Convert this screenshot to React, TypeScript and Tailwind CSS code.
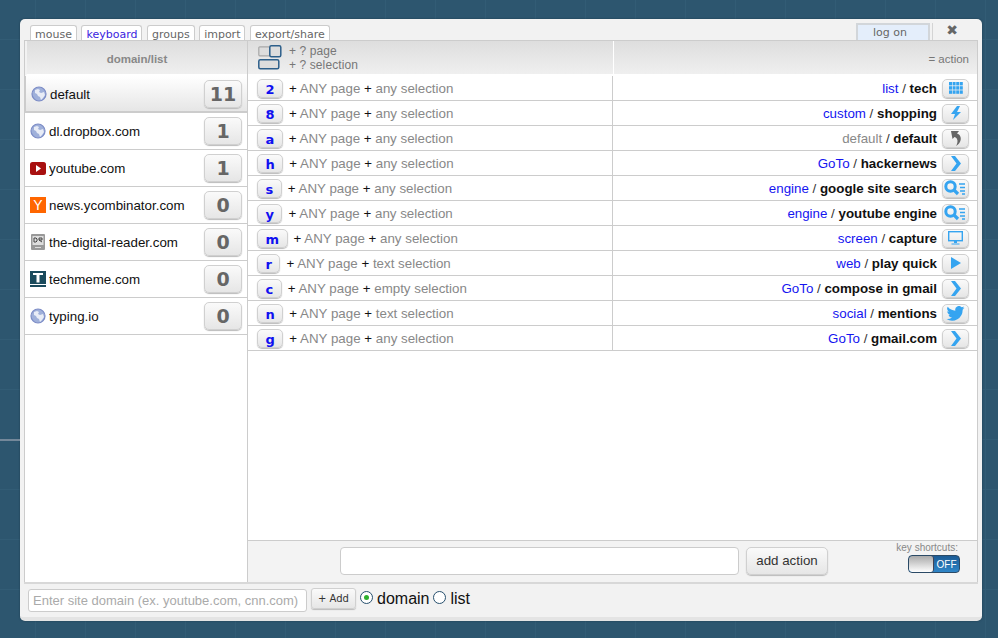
import React from 'react'

const blue = '#35a4f0'

function Globe() {
  return (
    <svg width="16" height="16" viewBox="0 0 16 16" className="shrink-0">
      <circle cx="8" cy="8" r="7" fill="#9fb0da" stroke="#7c8cc6" strokeWidth="1.200" />
      <path d="M4 4l3-1 2 1-1 2 2 1 3-1 1 3-2 3-2 2-1-3-2-1-1-2-2-1z" fill="#e8ecf6" />
    </svg>
  )
}

function Youtube() {
  return (
    <svg width="16" height="13" viewBox="0 0 16 13" className="shrink-0">
      <rect width="16" height="13" rx="2.500" fill="#a81010" />
      <path d="M6 3l5 3.500-5 3.500z" fill="#fff" />
    </svg>
  )
}

function Ycomb() {
  return (
    <div className="w-4 h-4 shrink-0 bg-[#ff6600] text-white text-[14px] leading-4 text-center font-['Liberation_Sans',sans-serif]">
      Y
    </div>
  )
}

function DigitalReader() {
  return (
    <svg width="16" height="16" viewBox="0 0 16 16" className="shrink-0">
      <rect x="1" width="14" height="16" rx="1" fill="#999" />
      <rect x="2.500" y="2" width="11" height="9" fill="#ddd" />
      <rect x="5" y="13" width="6" height="1" fill="#ddd" />
      <path d="M4 4h2l1 1v2l-1 1H4zM9 4h3v2H9zM9 6l3 2" fill="none" stroke="#444" strokeWidth="1" />
    </svg>
  )
}

function Techmeme() {
  return (
    <svg width="16" height="16" viewBox="0 0 16 16" className="shrink-0">
      <rect width="16" height="13" fill="#1a4a5c" />
      <rect y="14" width="16" height="2" fill="#1a4a5c" />
      <path d="M3 2h10v2h-3.500v7.500h-3V4H3z" fill="#fff" />
    </svg>
  )
}

const domains = [
  { name: 'default', count: '11', icon: <Globe />, active: true },
  { name: 'dl.dropbox.com', count: '1', icon: <Globe /> },
  { name: 'youtube.com', count: '1', icon: <Youtube /> },
  { name: 'news.ycombinator.com', count: '0', icon: <Ycomb /> },
  { name: 'the-digital-reader.com', count: '0', icon: <DigitalReader /> },
  { name: 'techmeme.com', count: '0', icon: <Techmeme /> },
  { name: 'typing.io', count: '0', icon: <Globe /> },
]

const GridIcon = () => (
  <svg width="14" height="12" viewBox="0 0 14 12" fill={blue}>
    {[0, 3.600, 7.200, 10.800].map((x) => [0, 4.200, 8.400].map((y) => <rect key={`${x}-${y}`} x={x} y={y} width="3" height="3.400" />))}
  </svg>
)
const BoltIcon = () => (
  <svg width="12" height="14" viewBox="0 0 12 14" fill={blue}>
    <path d="M7 0L1 8h4l-2 6 8-8H7l3-6z" />
  </svg>
)
const BackIcon = () => (
  <svg width="14" height="15" viewBox="0 0 14 15" fill="#666">
    <path d="M2 0l8 0-2 2.500c3 1 4.500 4 3.500 7-.5 2-2 4-4.500 5.500 1.500-2.500 2-5 1-7-.5-1-1.500-1.800-2.500-2L3.500 8z" />
  </svg>
)
const ChevronIcon = () => (
  <svg width="10" height="15" viewBox="0 0 10 15" fill={blue}>
    <path d="M0 0h4l6 7.500-6 7.500H0l5.500-7.500z" />
  </svg>
)
const SearchIcon = () => (
  <svg width="23" height="16" viewBox="0 0 23 16" fill="none">
    <circle cx="6.500" cy="6.500" r="4.700" stroke={blue} strokeWidth="3" />
    <path d="M10 10l4 4" stroke={blue} strokeWidth="3.200" />
    <path d="M15 4h6M16 7.500h5M16 11h5M18 14h3" stroke={blue} strokeWidth="1.300" />
  </svg>
)
const ScreenIcon = () => (
  <svg width="15" height="14" viewBox="0 0 15 14" fill="none">
    <rect x="0.700" y="0.700" width="13.600" height="9" stroke={blue} strokeWidth="1.400" />
    <path d="M6 10h3v2H6zM3.500 12.500h8v1h-8z" fill={blue} />
  </svg>
)
const PlayIcon = () => (
  <svg width="10" height="12" viewBox="0 0 10 12" fill={blue}>
    <path d="M0 0l10 6-10 6z" />
  </svg>
)
const BirdIcon = () => (
  <svg width="19" height="15" viewBox="0 0 24 20" fill={blue}>
    <path d="M24 2.400a9.800 9.800 0 0 1-2.800.8A4.900 4.900 0 0 0 23.300.5a9.800 9.800 0 0 1-3.100 1.200A4.900 4.900 0 0 0 11.800 6.200 14 14 0 0 1 1.700.9a4.900 4.900 0 0 0 1.500 6.600 4.900 4.900 0 0 1-2.200-.6c0 2.400 1.700 4.400 3.900 4.900a4.900 4.900 0 0 1-2.200.1 4.900 4.900 0 0 0 4.600 3.400A9.900 9.900 0 0 1 0 17.300 14 14 0 0 0 21.500 4.900c1-.7 1.800-1.500 2.500-2.500z" />
  </svg>
)

const actions = [
  { key: '2', sel: 'any selection', type: 'list', name: 'tech', icon: <GridIcon /> },
  { key: '8', sel: 'any selection', type: 'custom', name: 'shopping', icon: <BoltIcon /> },
  { key: 'a', sel: 'any selection', type: 'default', name: 'default', icon: <BackIcon />, gray: true },
  { key: 'h', sel: 'any selection', type: 'GoTo', name: 'hackernews', icon: <ChevronIcon /> },
  { key: 's', sel: 'any selection', type: 'engine', name: 'google site search', icon: <SearchIcon /> },
  { key: 'y', sel: 'any selection', type: 'engine', name: 'youtube engine', icon: <SearchIcon /> },
  { key: 'm', sel: 'any selection', type: 'screen', name: 'capture', icon: <ScreenIcon /> },
  { key: 'r', sel: 'text selection', type: 'web', name: 'play quick', icon: <PlayIcon /> },
  { key: 'c', sel: 'empty selection', type: 'GoTo', name: 'compose in gmail', icon: <ChevronIcon /> },
  { key: 'n', sel: 'text selection', type: 'social', name: 'mentions', icon: <BirdIcon /> },
  { key: 'g', sel: 'any selection', type: 'GoTo', name: 'gmail.com', icon: <ChevronIcon /> },
]

const tabs = ['mouse', 'keyboard', 'groups', 'import', 'export/share']

const pill = 'border border-[#d0d0d0] bg-gradient-to-b from-[#fafafa] to-[#e6e6e6] shadow-[0_1px_1px_#bbb]'

export default function App() {
  return (
    <div className="relative w-[998px] h-[638px] overflow-hidden pt-[19px] pl-[20px] bg-[#2d566f] bg-[linear-gradient(#325c75_1px,transparent_1px),linear-gradient(90deg,#325c75_1px,transparent_1px)] bg-[size:50px_50px] bg-[position:35px_39px] font-['Liberation_Sans',sans-serif]">
      <div className="absolute left-0 top-[439px] w-[20px] h-[2px] bg-[#74889a]" />
      <div className="w-[962px] h-[602px] rounded-[5px] bg-[#f2f2f2] border-b-4 border-[#e4e4e4] flex flex-col px-1 shadow-[0_0_2px_#1c3a4c]">
        {/* tab bar */}
        <div className="h-[21px] shrink-0 flex items-end pl-[6px] relative">
          <div className="flex gap-[4.500px] font-['DejaVu_Sans',sans-serif] text-[11px] leading-[17px] text-[#666]">
            {tabs.map((t) => (
              <div
                key={t}
                className={`h-[15px] px-[4px] border border-b-0 border-[#ccc] rounded-t-[3px] bg-white overflow-hidden ${
                  t === 'keyboard' ? 'text-[#3a1de0]' : ''
                }`}
              >
                {t}
              </div>
            ))}
          </div>
          <div className="absolute right-[48px] top-[4px] w-[74px] h-[17px] pr-[6px] bg-[#e4eefb] border-2 border-b-0 border-[#d2d6da] text-center font-['DejaVu_Sans',sans-serif] text-[11px] leading-[15px] text-[#666]">
            log on
          </div>
          <div className="absolute right-[45px] top-[4px] h-[17px] w-px bg-[#d4d4d4]" />
          <div className="absolute right-[20px] top-[1px] font-['DejaVu_Sans',sans-serif] text-[14px] leading-[20px] text-[#666]">
            ✖
          </div>
        </div>

        {/* main panel */}
        <div className="h-[542px] shrink-0 flex border-t border-x border-[#ccc] bg-white">
          <div className="w-[223px] shrink-0 border-r border-[#ccc] flex flex-col">
            <div className="h-[35px] shrink-0 border-l-2 border-[#f2f2f2] bg-gradient-to-b from-[#dedede] to-[#efefef] text-center text-[11.500px] leading-[37px] font-bold text-[#888] border-b-2 border-b-white">
              domain/list
            </div>
            {domains.map((d) => (
              <div
                key={d.name}
                className={`h-[37px] shrink-0 border-b border-[#ccc] flex items-center pl-[5px] pr-[5px] text-[13.330px] text-[#111] ${
                  d.active ? 'bg-gradient-to-b from-white to-[#e6e6e6] border-b-2 border-l border-l-[#ccc]' : ''
                }`}
              >
                {d.icon}
                <span className="ml-[3px] pt-[2px] flex-1 truncate">{d.name}</span>
                <div
                  className={`w-[38px] h-[28px] rounded-[5px] text-center font-['DejaVu_Sans',sans-serif] font-bold text-[19px] leading-[26px] text-[#666] ${pill}`}
                >
                  {d.count}
                </div>
              </div>
            ))}
          </div>

          <div className="flex-1 flex flex-col min-w-0">
            <div className="h-[35px] shrink-0 flex bg-gradient-to-b from-[#dedede] to-[#efefef] border-b-2 border-white">
              <div className="w-[366px] shrink-0 flex items-center pl-[10px] border-r border-white">
                <svg width="24" height="25" viewBox="0 0 24 25" className="shrink-0">
                  <rect x="0.800" y="1.800" width="11" height="9" rx="1" fill="#ddd" stroke="#a8a8a8" strokeWidth="1.200" />
                  <rect x="11.800" y="0.800" width="11" height="11" rx="1.500" fill="#ddd" stroke="#2d5f8a" strokeWidth="1.500" />
                  <rect x="0.800" y="14.800" width="20" height="9" rx="1.500" fill="#ddd" stroke="#2d5f8a" strokeWidth="1.500" />
                </svg>
                <div className="ml-[7px] text-[12px] leading-[14px] tracking-[0.1px] text-[#777]">
                  <div>+ ? page</div>
                  <div>+ ? selection</div>
                </div>
              </div>
              <div className="flex-1 text-right pr-[8px] text-[11.500px] leading-[37px] text-[#777]">= action</div>
            </div>

            {actions.map((a) => (
              <div key={a.key} className="h-[25px] shrink-0 flex border-b border-[#ccc] text-[13.330px]">
                <div className="w-[365px] shrink-0 flex items-center pl-[9px] border-r border-[#ccc] whitespace-pre text-[#888]">
                  <div
                    className={`h-[19px] px-[7.500px] rounded-[5px] text-center font-['DejaVu_Sans',sans-serif] font-bold text-[13px] leading-[19px] text-[#1010f0] ${pill}`}
                  >
                    {a.key}
                  </div>
                  <div className="ml-[6px] pt-[2px]">
                    <span className="text-[#111]">+ </span>
                    <span>ANY page </span>
                    <span className="text-[#111]">+ </span>
                    <span>{a.sel}</span>
                  </div>
                </div>
                <div className="flex-1 flex items-center justify-end pr-[8px] whitespace-pre">
                  <div className="pt-[2px]">
                    <span className={a.gray ? 'text-[#888]' : 'text-[#1515f0]'}>{a.type}</span>
                    <span className="text-[#333]"> / </span>
                    <span className="font-bold text-[#111]">{a.name}</span>
                  </div>
                  <div className={`ml-[5px] w-[27px] h-[19px] rounded-[5px] flex items-center justify-center ${pill}`}>
                    {a.icon}
                  </div>
                </div>
              </div>
            ))}

            {/* add action bar */}
            <div className="mt-auto h-[42px] shrink-0 border-t border-[#ccc] bg-[#f3f3f3] flex items-start pt-[6px] pl-[92px]">
              <input className="w-[399px] h-[28px] rounded-[4px] border border-[#ccc] bg-white" />
              <div className={`ml-[7px] w-[82px] h-[28px] rounded-[5px] text-center text-[13.330px] leading-[26px] text-[#333] ${pill}`}>
                add action
              </div>
              <div className="ml-[68px] -mt-[5px] w-[64px] flex flex-col items-end">
                <div className="text-[10px] leading-[12px] text-[#888] pr-[2px] whitespace-nowrap">key shortcuts:</div>
                <div className="mt-[1px] w-[52px] h-[18px] rounded-[4px] border border-[#2b4a66] bg-gradient-to-b from-[#1c5c96] to-[#2f86c8] flex overflow-hidden">
                  <div className="w-[25px] rounded-[3px] bg-gradient-to-b from-[#aaa] to-white border-r border-[#445]" />
                  <div className="flex-1 text-center text-[10px] leading-[17px] text-white">OFF</div>
                </div>
              </div>
            </div>
          </div>
        </div>

        {/* footer */}
        <div className="flex-1 border-t-2 border-[#d8d8d8] flex items-start pt-[4px] text-[16px] text-[#111]">
          <input
            placeholder="Enter site domain (ex. youtube.com, cnn.com)"
            className="w-[279px] h-[23px] mt-[1px] ml-[4px] pl-[4px] pr-0 rounded-[3px] border border-[#ccc] bg-white text-[13px] placeholder:text-[#aaa]"
          />
          <div className={`ml-[4px] w-[45px] h-[21px] rounded-[3px] text-center font-['DejaVu_Sans',sans-serif] text-[10px] leading-[19px] text-[#333] ${pill}`}>
            + Add
          </div>
          <div className="ml-[4px] mt-[3px] w-[13px] h-[13px] rounded-full border border-[#27506e] bg-white flex items-center justify-center">
            <div className="w-[5px] h-[5px] rounded-full bg-[#2eb02e]" />
          </div>
          <span className="ml-[4px] leading-[21px]">domain</span>
          <div className="ml-[4px] mt-[3px] w-[13px] h-[13px] rounded-full border border-[#27506e] bg-white" />
          <span className="ml-[4px] leading-[21px]">list</span>
        </div>
      </div>
    </div>
  )
}
